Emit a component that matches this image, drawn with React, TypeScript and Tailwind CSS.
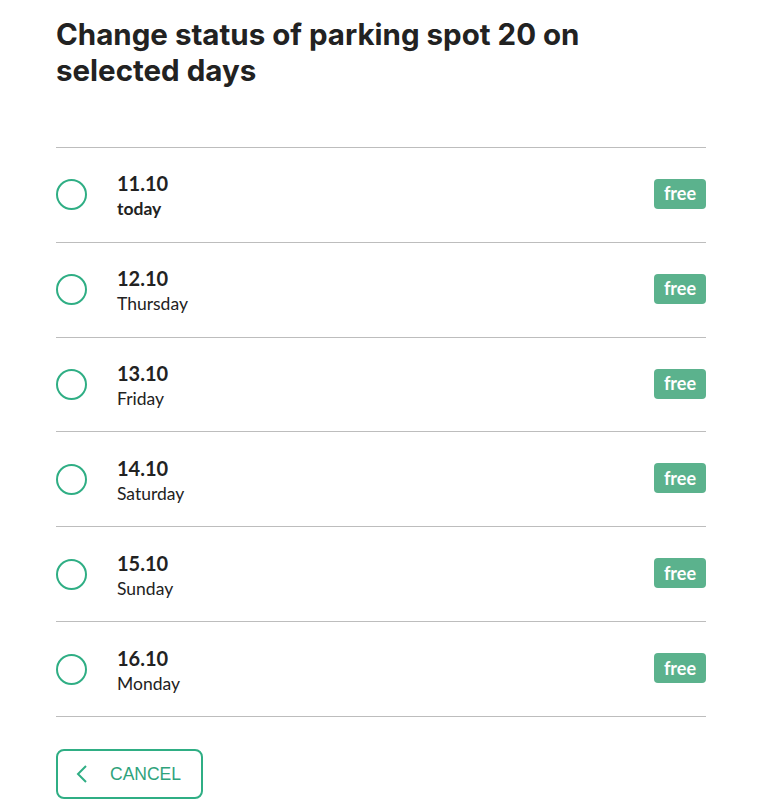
import React from 'react';

const days = [
    { date: '11.10', label: 'today', bold: true },
    { date: '12.10', label: 'Thursday' },
    { date: '13.10', label: 'Friday' },
    { date: '14.10', label: 'Saturday' },
    { date: '15.10', label: 'Sunday' },
    { date: '16.10', label: 'Monday' },
];

const DayRow: React.FC<{ date: string; label: string; bold?: boolean }> = ({ date, label, bold }) => (
    <div className="flex items-center h-[94.83px] border-b border-[#bdbdbd]">
        <span className="w-[31px] h-[31px] rounded-full border-2 border-[#2fae84] shrink-0"></span>
        <div className="ml-[30px] flex-1 pt-[3px]">
            <div className="text-[20px] leading-[26px] font-bold text-[#222]">{date}</div>
            <div className={`text-[17.5px] leading-[26px] text-[#222] ${bold ? 'font-bold' : 'font-normal'}`}>{label}</div>
        </div>
        <span className="bg-[#5bb28d] text-white text-[18px] font-bold rounded-[4px] h-[30px] w-[52px] mb-[2px] flex items-center justify-center">
            free
        </span>
    </div>
);

export default function App() {
    return (
        <div className="bg-white min-h-[812px] px-[56px] pt-[16px] w-[764px]" style={{ fontFamily: 'Lato, "Noto Sans", sans-serif' }}>
            <h1 className="text-[29.5px] leading-[36px] font-bold text-[#222] max-w-[560px]" style={{ fontFamily: 'Inter, sans-serif' }}>
                Change status of parking spot 20 on selected days
            </h1>
            <div className="mt-[59px] w-[650px] border-t border-[#bdbdbd]">
                {days.map((d) => (
                    <DayRow key={d.date} {...d} />
                ))}
            </div>
            <button className="mt-[32px] flex items-center h-[50px] w-[147px] border-2 border-[#2fae84] rounded-lg pl-[18px] text-[#2fa37c] text-[17.5px]" style={{ fontFamily: '"Liberation Sans", Arial, sans-serif' }}>
                <svg width="12" height="18" viewBox="0 0 12 18" fill="none" stroke="#2fae84" strokeWidth="2">
                    <path d="M10 1 L2 9 L10 17" />
                </svg>
                <span className="ml-[22px]">CANCEL</span>
            </button>
        </div>
    );
}
